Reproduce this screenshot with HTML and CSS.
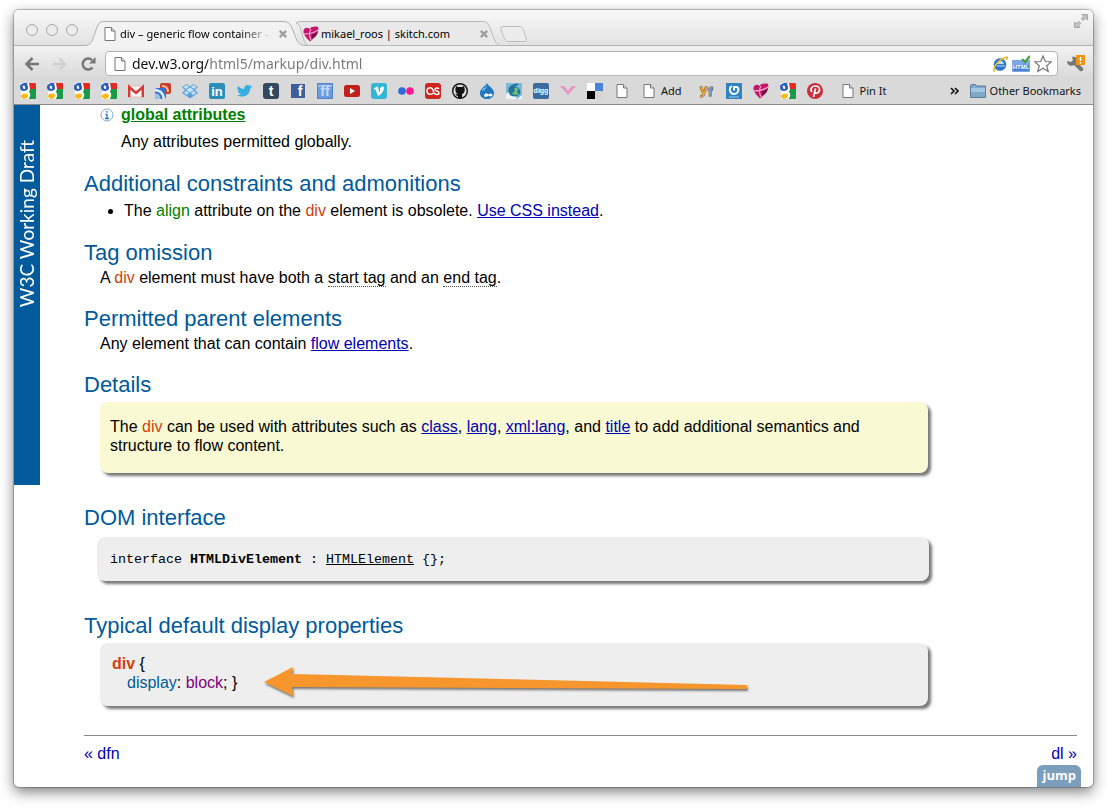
FILE: index.html
```
<!DOCTYPE html>
<html lang="en">
<head>
<meta charset="utf-8">
<title>div – generic flow container</title>
<link rel="stylesheet" href="styles.css">
</head>
<body>
<svg class="defs" aria-hidden="true">
  <symbol id="page" viewBox="0 0 16 16"><path d="M3 1.5h6.5l3.5 3.5v9.5H3z" fill="#fff" stroke="#777"/><path d="M9.5 1.5V5H13" fill="#ddd" stroke="#777"/></symbol>
  <symbol id="google" viewBox="0 0 16 16"><path d="M1 0h14q1 0 1 1v14q0 1-1 1H1z" fill="#fff"/><path d="M9 0h6q1 0 1 1v5H10z" fill="#e32b22"/><path d="M10 6h6v9q0 1-1 1H8.500c2.500-3 2-5 .5-7z" fill="#189a49"/><path d="M0 4.500C0 1.500 2.500 0 5 0h2.500C6.500 2 8.500 3 8 5.500 7.500 8.500 0 9.500 0 4.500z" fill="#2a5fc0"/><ellipse cx="4" cy="4.300" rx="1.200" ry="1.800" transform="rotate(-20 4 4.300)" fill="#fff"/><path d="M1 12.500C2 10 8 9.500 8 12.500 8 16.500 1.500 17 1 13.500z" fill="#f6bb17"/></symbol>
  <symbol id="heart" viewBox="0 0 16 16"><path d="M7 15.500C4 12 0 9 .5 5c.5-3.500 4-4 6-2C8 .5 13 0 15 1c1.500 5-2 10-8 14.500z" fill="#c4156b"/><path d="M8 3c-2 3-2 7 0 11M1 8c5 0 10-1 14-4" fill="none" stroke="#f4a5cb" stroke-width="1.300"/><path d="M9 8.500c3-1 5-2 6-3-1 4-3 6-6 7z" fill="#7d0a42"/></symbol>
  <symbol id="close" viewBox="0 0 10 10"><path d="M1.800 1.800l6.400 6.400M8.200 1.800l-6.400 6.400" stroke="#a0a0a0" stroke-width="2.400"/></symbol>
</svg>
<div class="window">
  <header class="chrome">
    <div class="tabstrip">
      <div class="lights"><button class="light" aria-label="Close window"></button><button class="light" aria-label="Minimize"></button><button class="light" aria-label="Zoom"></button></div>
      <div class="tab tab-active">
        <svg class="tab-shape" viewBox="0 0 222 25" preserveAspectRatio="none"><path d="M0 24.500C8 24.500 8 20 11 12C14 3 15 .5 20 .5H200C205 .5 207 4 210 12C213 20 214 24.500 222 24.500V25H0z" fill="#f2f2f2"/><path d="M0 24.500C8 24.500 8 20 11 12C14 3 15 .5 20 .5H200C205 .5 207 4 210 12C213 20 214 24.500 222 24.500" fill="none" stroke="#b0b0b0"/></svg>
        <svg class="icon"><use href="#page"/></svg>
        <span class="tab-title fade">div – generic flow container –</span>
        <button class="tab-close" aria-label="Close tab"><svg><use href="#close"/></svg></button>
      </div>
      <div class="tab tab-idle">
        <svg class="tab-shape" viewBox="0 0 208 25" preserveAspectRatio="none"><path d="M3 .5H187C192 .5 193 4 196 12C199 20 200 24.500 206 24.500H14C9 24.500 8 20 6 13C4 5 3 3 0 2z" fill="#e9e9e9" stroke="#b8b8b8"/></svg>
        <svg class="icon"><use href="#heart"/></svg>
        <span class="tab-title">mikael_roos | skitch.com</span>
        <button class="tab-close" aria-label="Close tab"><svg><use href="#close"/></svg></button>
      </div>
      <button class="newtab" aria-label="New tab"><svg viewBox="0 0 27 16"><path d="M3 .5H19C23 .5 24 5 26 12C27 15 26 15.500 24 15.500H9C5 15.500 4 12 1.500 5C.3 1.500 1 .5 3 .5z" fill="#ececec" stroke="#bcbcbc"/></svg></button>
      <button class="expand" aria-label="Full screen"><svg viewBox="0 0 16 16"><path d="M9 1.500h5.500V7l-1.800-1.800-2.500 2.500-2-2 2.500-2.500zM1.500 9l1.800 1.800 2.500-2.500 2 2-2.500 2.500L7 14.500H1.500z" fill="#c4c4c4" stroke="#999" stroke-width=".8"/></svg></button>
    </div>
    <div class="toolbar">
      <button class="nav" aria-label="Back"><svg viewBox="0 0 16 16"><path d="M8.500 2L2.500 8l6 6M3 8h12" fill="none" stroke="#777" stroke-width="2.600"/></svg></button>
      <button class="nav" aria-label="Forward"><svg viewBox="0 0 16 16"><path d="M7.500 2.500L13 8l-5.500 5.500M13 8H1" fill="none" stroke="#cfcfcf" stroke-width="2.400"/></svg></button>
      <button class="nav" aria-label="Reload"><svg viewBox="0 0 16 16"><path d="M12.500 11.500A5.500 5.500 0 1 1 12 4" fill="none" stroke="#777" stroke-width="2.500"/><path d="M15.500 1v6.500H9z" fill="#777"/></svg></button>
      <div class="omnibox">
        <svg class="icon"><use href="#page"/></svg>
        <input class="url" type="text" aria-label="Address" value="dev.w3.org/html5/markup/div.html">
        <svg class="icon" viewBox="0 0 16 16"><circle cx="8" cy="8.500" r="6.300" fill="#2e75cc"/><path d="M5 7.500h6.500C11 4.500 5.500 4.500 5 7.500zM5 10h8" fill="#c9e5fb" stroke="#b9dcf6"/><path d="M3 15.500C-1 14 6 3 15 1c1 1 0 2-1 3" fill="none" stroke="#e8bd2c" stroke-width="1.600"/></svg>
        <svg class="icon wide" viewBox="0 0 18 16"><path d="M.5 4.500h17v11H.5z" fill="#4b83d4" stroke="#7ea6df"/><path d="M1 5h16v4H1z" fill="#78a8e8"/><text x="9" y="13" text-anchor="middle" class="t-html">HTML</text><path d="M10 3l3 3 5-6" fill="none" stroke="#41a03a" stroke-width="2.200"/></svg>
        <svg class="icon wide" viewBox="0 0 18 18"><path d="M9 1l2.300 5.500 6 .4-4.600 3.800 1.500 5.800L9 13.300l-5.200 3.200 1.500-5.800L.7 6.900l6-.4z" fill="#fff" stroke="#777" stroke-width="1.200"/></svg>
      </div>
      <button class="wrench" aria-label="Settings"><svg viewBox="0 0 20 18"><path d="M1 6l4 1 2-2-1-3c4-1 6 2 5 5l6 6c1 2-1 4-3 3L8 10C5 12 1 10 1 6z" fill="#777"/><path d="M10 0h9v10h-9z" fill="#ef9414"/><path d="M14.500 2v4M14.500 7v1.500" stroke="#fff" stroke-width="1.600"/></svg></button>
    </div>
    <nav class="bookmarks">
      <a href="#" aria-label="Google"><svg class="icon"><use href="#google"/></svg></a>
      <a href="#" aria-label="Google"><svg class="icon"><use href="#google"/></svg></a>
      <a href="#" aria-label="Google"><svg class="icon"><use href="#google"/></svg></a>
      <a href="#" aria-label="Google"><svg class="icon"><use href="#google"/></svg></a>
      <a href="#" aria-label="Gmail"><svg class="icon" viewBox="0 0 16 16"><path d="M0 3h16v11H0z" fill="#f7f4f2" stroke="#d9a19c" stroke-width=".6"/><path d="M1.200 14V4L8 10l6.800-6v10" fill="none" stroke="#d63a32" stroke-width="2.400"/></svg></a>
      <a href="#" aria-label="Reader"><svg class="icon" viewBox="0 0 16 16"><rect x="5" width="11" height="11" rx="2" fill="#cc3d26"/><path d="M7 3c4 0 6 2 6 6" stroke="#f3b8a6" stroke-width="2" fill="none"/><rect y="5" width="11" height="11" rx="2" fill="#2f72cf"/><path d="M0 6c6 0 10 4 10 10H7.500C7.500 11.500 4.500 8.500 0 8.500z" fill="#e4effb"/><path d="M0 10.500c3.500 0 5.500 2 5.500 5.500H2q-2 0-2-2z" fill="#9cc2ef"/></svg></a>
      <a href="#" aria-label="Dropbox"><svg class="icon" viewBox="0 0 16 16"><path d="M5 1l3 2.500L11 1l5 3-3 3 3 3-3 2-5 3.500L3 12l-3-2 3-3-3-3z" fill="#5a9edb"/><path d="M8 4.500L12 7l-4 2.500L4 7zM1.500 4L5 2l2 2-3.500 2zM14.500 4L11 2 9 4l3.500 2zM2 10l2-2 3 2-2 2zM14 10l-2-2-3 2 2 2z" fill="#c8e3fa"/></svg></a>
      <a href="#" aria-label="LinkedIn"><svg class="icon" viewBox="0 0 16 16"><rect width="16" height="16" rx="2" fill="#2b8dbb"/><text x="8" y="13" text-anchor="middle" class="t-big">in</text></svg></a>
      <a href="#" aria-label="Twitter"><svg class="icon" viewBox="0 0 16 16"><path d="M2 3c2 2 4 3 6 3 0-4 4-5 6-3l2-1-1 2 1 0-2 2c0 6-7 10-13 6 2 0 3 0 4-1-2-1-3-1-3-3h1C1 7 1 5 2 3z" fill="#35aee2"/></svg></a>
      <a href="#" aria-label="Tumblr"><svg class="icon" viewBox="0 0 16 16"><rect width="16" height="16" rx="3" fill="#34485f"/><text x="8" y="13" text-anchor="middle" class="t-xl">t</text></svg></a>
      <a href="#" aria-label="Facebook"><svg class="icon" viewBox="0 0 16 16"><path d="M1 1h14v14H1z" fill="#3f5d9c"/><text x="10" y="13" text-anchor="middle" class="t-xl">f</text></svg></a>
      <a href="#" aria-label="FriendFeed"><svg class="icon" viewBox="0 0 16 16"><path d="M0 0h16v16H0z" fill="#6a9bdf"/><path d="M.5 .5h15v15H.5z" fill="none" stroke="#5282c8"/><path d="M1 3h14" stroke="#a9c9f3" stroke-width="1.500"/><text x="8" y="13" text-anchor="middle" class="t-xl pale">ff</text></svg></a>
      <a href="#" aria-label="YouTube"><svg class="icon" viewBox="0 0 16 16"><rect y="2" width="16" height="12" rx="2.500" fill="#c4201b"/><path d="M6 5l5 3-5 3z" fill="#fff"/></svg></a>
      <a href="#" aria-label="Vimeo"><svg class="icon" viewBox="0 0 16 16"><rect width="16" height="16" rx="3" fill="#35b5d8"/><path d="M3 5.500l3-2c1.500 0 1.500 4 2.300 5.500C9.500 8 10 7 8.700 6.500 9.500 3 13 2.500 13 5c0 3-4 7.500-5.500 7.800C6 12.500 5.500 8 4.800 6.300L3.500 7z" fill="#fff"/></svg></a>
      <a href="#" aria-label="Flickr"><svg class="icon" viewBox="0 0 16 16"><circle cx="4" cy="8" r="3.800" fill="#286bdc"/><circle cx="12" cy="8" r="3.800" fill="#f8168d"/></svg></a>
      <a href="#" aria-label="Last.fm"><svg class="icon" viewBox="0 0 16 16"><rect width="16" height="16" rx="3" fill="#ce2520"/><path d="M8 10c-1 2-6 2-6-2s5-4 6-1l1 3c1 2 5 2 5 0 0-3-4-1-4-3.500 0-2 3-2 4-.7" fill="none" stroke="#fff" stroke-width="1.500"/></svg></a>
      <a href="#" aria-label="GitHub"><svg class="icon" viewBox="0 0 16 16"><circle cx="8" cy="8" r="8" fill="#111"/><circle cx="8" cy="8" r="6.600" fill="#ddd"/><path d="M4 3l2 1h4l2-1c1 3 1.500 7-2 8v4H6v-2c-2 0-2-2-3-2 1-1 2 1 3 0-3-1-3-5-2-8z" fill="#111"/></svg></a>
      <a href="#" aria-label="Drupal"><svg class="icon" viewBox="0 0 16 16"><path d="M8 0c1 3 7 5 7 10 0 8-14 8-14 0C1 5 7 3 8 0z" fill="#2278bd"/><path d="M3 6c3-1 4-2 5-4 0 3-2 5-5 6z" fill="#82c0ea"/><path d="M5 12.500c1-3 3.500-2 4.500-1 2-2 4-1 4 .5s-2.500 2-4 .5c-1 1.500-4.500 2-4.500 0z" fill="#fff"/></svg></a>
      <a href="#" aria-label="Bookmark"><svg class="icon" viewBox="0 0 16 16"><path d="M0 0h16v16H0z" fill="#7cb8da"/><path d="M0 11l6-4 5 9H0zM11 16l5-4v4z" fill="#eaf5fb"/><path d="M4 12C-1 4 7 0 13 1L9 4c4 0 6 3 5 7-2 3-8 3-10 1z" fill="#21759b"/><path d="M8 5c4-1 5 2 3 4l2 2c-3 2-6 0-8-1 3 0 5-2 3-5z" fill="#72bd70"/></svg></a>
      <a href="#" aria-label="Digg"><svg class="icon" viewBox="0 0 16 16"><rect width="16" height="16" rx="2" fill="#3b6b9f"/><text x="8" y="10" text-anchor="middle" class="t-digg">digg</text></svg></a>
      <a href="#" aria-label="Bookmark"><svg class="icon" viewBox="0 0 16 16"><path d="M0 3h4l4 5 4-5h4l-8 9z" fill="#e68fbd"/><path d="M2 3l6 7 6-7" stroke="#f4bddb" stroke-dasharray="1 1" fill="none"/></svg></a>
      <a href="#" aria-label="Delicious"><svg class="icon" viewBox="0 0 16 16"><path d="M0 0h8v8H0z" fill="#fff"/><path d="M8 0h8v8H8z" fill="#4b83d8"/><path d="M0 8h8v8H0z" fill="#000"/><path d="M8 8h8v8H8z" fill="#d4d4d4"/></svg></a>
      <a href="#" aria-label="Bookmark"><svg class="icon"><use href="#page"/></svg></a>
      <a href="#" class="labelled"><svg class="icon"><use href="#page"/></svg>Add</a>
      <a href="#" aria-label="YF"><svg class="icon" viewBox="0 0 16 16"><text x="1" y="11" class="t-yf y">y</text><text x="9" y="13" class="t-yf f">f</text></svg></a>
      <a href="#" aria-label="Bookmark"><svg class="icon" viewBox="0 0 16 16"><path d="M0 0h16v16H0z" fill="#2f83c0"/><path d="M6 3C2 5 4 11 8 11s6-5 3-7H8v3.500" fill="none" stroke="#fff" stroke-width="1.800"/><path d="M3 14h10" stroke="#9fcbe9"/></svg></a>
      <a href="#" aria-label="Skitch"><svg class="icon"><use href="#heart"/></svg></a>
      <a href="#" aria-label="Google"><svg class="icon"><use href="#google"/></svg></a>
      <a href="#" aria-label="Pinterest"><svg class="icon" viewBox="0 0 16 16"><circle cx="8" cy="8" r="8" fill="#cc2f38"/><path d="M5 9C2.500 6 5 3 8.500 3s5 3 3.500 5.500-4 2-4 .5M8.500 5.500L6.500 14" fill="none" stroke="#fff" stroke-width="1.700"/></svg></a>
      <a href="#" class="labelled pin"><svg class="icon"><use href="#page"/></svg>Pin It</a>
      <button class="more" aria-label="More bookmarks"><svg viewBox="0 0 9 8"><path d="M1 1l3 3-3 3M5 1l3 3-3 3" fill="none" stroke="#111" stroke-width="1.600"/></svg></button>
      <a href="#" class="labelled folder"><svg class="icon" viewBox="0 0 16 16"><path d="M.5 14.500v-12l1-1h4l1 1.500h9v11.500z" fill="#7fa9c8" stroke="#5b7f9b"/><path d="M1 5h14v4H1z" fill="#a6c6dd"/></svg>Other Bookmarks</a>
    </nav>
  </header>
  <div class="page">
    <aside class="ribbon"><span>W3C Working Draft</span></aside>
    <main class="content">
      <dl class="attrs">
        <dt><svg class="info" viewBox="0 0 14 14"><circle cx="7" cy="7" r="6" fill="none" stroke="#7fabd0"/><path d="M7 3v1.800M5.500 6.500H7v4M5 10.500h4" fill="none" stroke="#2a75b0" stroke-width="1.300"/></svg><a href="#" class="global">global attributes</a></dt>
        <dd>Any attributes permitted globally.</dd>
      </dl>
      <section>
        <h2>Additional constraints and admonitions</h2>
        <ul><li>The <span class="attr">align</span> attribute on the <span class="elem">div</span> element is obsolete. <a href="#">Use CSS instead</a>.</li></ul>
      </section>
      <section>
        <h2>Tag omission</h2>
        <p>A <span class="elem">div</span> element must have both a <span class="term">start tag</span> and an <span class="term">end tag</span>.</p>
      </section>
      <section>
        <h2>Permitted parent elements</h2>
        <p>Any element that can contain <a href="#">flow elements</a>.</p>
      </section>
      <section>
        <h2>Details</h2>
        <div class="box note">The <span class="elem">div</span> can be used with attributes such as <a href="#">class</a>, <a href="#">lang</a>, <a href="#">xml:lang</a>, and <a href="#">title</a> to add additional semantics and structure to flow content.</div>
      </section>
      <section>
        <h2>DOM interface</h2>
        <pre class="box idl">interface <b>HTMLDivElement</b> : <a href="#">HTMLElement</a> {};</pre>
      </section>
      <section>
        <h2>Typical default display properties</h2>
        <div class="box css">
          <div><b class="elem">div</b> {</div>
          <div class="decl"><span class="prop">display</span>: <span class="value">block</span>; }</div>
          <svg class="arrow" viewBox="0 0 490 36"><path d="M2 17L31 2l-1 7 455 11v4L30 22l1 9z" fill="#f7962d"/></svg>
        </div>
      </section>
      <footer class="pager"><a href="#">« dfn</a><a href="#">dl »</a></footer>
    </main>
    <button class="jump">jump</button>
  </div>
</div>
</body>
</html>
```
FILE: styles.css
```
* { box-sizing: border-box; }
body {
  margin: 0;
  padding: 10px 14px 20px;
  background: #fff;
  color: #000;
  font: 16px/19px "Liberation Sans", Arial, sans-serif;
}
button { padding: 0; border: 0; background: none; display: flex; }
.defs { position: absolute; width: 0; height: 0; }
.window {
  border-radius: 5px;
  background: #fff;
  box-shadow: 0 0 1px 1px rgba(0,0,0,.25), 0 5px 14px rgba(0,0,0,.5);
  overflow: hidden;
}
.chrome { font: 11px/16px "Noto Sans", "Open Sans", sans-serif; border-bottom: 1px solid #888; }
.icon { width: 16px; height: 16px; flex: none; }
.icon.wide { width: 18px; height: 18px; }

.tabstrip {
  display: flex;
  align-items: flex-end;
  height: 36px;
  background: linear-gradient(#f8f8f8, #e2e2e2);
  box-shadow: inset 0 -1px #b0b0b0;
}
.lights { display: flex; gap: 8px; padding: 0 0 10px 12px; width: 70px; }
.light { width: 12px; height: 12px; border: 1px solid #a8a8a8; border-radius: 50%; background: #ececec; flex: none; }
.tab { position: relative; display: flex; align-items: center; height: 25px; gap: 2px; }
.tab > * { position: relative; }
.tab .tab-shape { position: absolute; inset: 0; width: 100%; height: 100%; }
.tab-active { width: 222px; padding: 0 18px 0 18px; z-index: 1; }
.tab-idle { width: 208px; padding: 0 15px 0 7px; margin-left: -10px; }
.tab-title { flex: 1; white-space: nowrap; overflow: hidden; }
.fade { mask-image: linear-gradient(to right, #000 120px, transparent 152px); }
.tab-close svg { width: 10px; height: 10px; }
.newtab { margin: 0 0 4px -4px; }
.newtab svg { width: 27px; height: 16px; }
.expand { margin: 0 4px 17px auto; }
.expand svg { width: 16px; height: 16px; }

.toolbar {
  display: flex;
  align-items: center;
  gap: 12px;
  padding: 5px 7px 1px 10px;
  background: linear-gradient(#f2f2f2, #dadada);
}
.nav svg { width: 16px; height: 16px; }
.omnibox {
  flex: 1;
  display: flex;
  align-items: center;
  gap: 4px;
  height: 25px;
  padding: 0 5px 0 6px;
  margin-left: -3px;
  border: 1px solid #b4b4b4;
  border-radius: 4px;
  background: #fff;
}
.url {
  flex: 1;
  min-width: 0;
  padding: 0;
  border: 0;
  outline: 0;
  font: 14px/20px "Noto Sans", "Open Sans", sans-serif;
  color: #333;
  background: linear-gradient(to right, #111 76px, #777 76px);
  background-clip: text;
  -webkit-text-fill-color: transparent;
}
.wrench { margin-left: -4px; }
.wrench svg { width: 20px; height: 18px; }

.bookmarks {
  display: flex;
  align-items: center;
  gap: 11px;
  height: 27px;
  padding: 0 12px 0 6px;
  background: #d9d9d9;
}
.bookmarks a { display: flex; color: #111; text-decoration: none; white-space: nowrap; }
.labelled { gap: 4px; margin-right: 6px; }
.bookmarks .pin { margin-left: 6px; }
.more { margin-left: auto; }
.more svg { width: 9px; height: 8px; }
.bookmarks .folder { margin-right: 0; }
text { font-family: "Liberation Sans", Arial, sans-serif; font-weight: bold; fill: #fff; }
.t-big { font-size: 13px; }
.t-xl { font-size: 14px; }
.pale { fill: #c2daf8; }
.t-html { font-size: 6px; }
.t-digg { font-size: 7px; }
.t-yf { font-size: 13px; stroke: #665533; stroke-width: 1px; paint-order: stroke; }
.y { fill: #f4aa2a; }
.f { fill: #6f9fe0; }

.page { position: relative; display: flex; align-items: flex-start; }
.ribbon {
  width: 26px;
  height: 380px;
  flex: none;
  padding-top: 35px;
  background: #005a9c;
  color: #fff;
  font: 19px/26px Lato, sans-serif;
}
.ribbon span { writing-mode: vertical-rl; transform: rotate(180deg); white-space: nowrap; }
.content { flex: 1; min-width: 0; padding: 0 16px 24px 44px; }
a { color: #0000b4; }
.attrs { margin: 0 0 20px 16px; }
.attrs dt { display: flex; align-items: center; gap: 7px; margin-bottom: 8px; }
.attrs dd { margin: 0 0 0 21px; }
.info { width: 14px; height: 14px; }
.global { color: #008000; font-weight: bold; }
h2 { margin: 0; color: #005a9c; font-size: 22px; line-height: 26px; font-weight: normal; }
section { margin-bottom: 19px; }
section p { margin: 2px 0 0 16px; }
ul { margin: 0; padding: 4px 0 1px 40px; }
.attr { color: #008000; }
.elem { color: #d1400e; }
.term { border-bottom: 1px dotted #555; }
.box { position: relative; max-width: 828px; margin: 4px 0 32px 16px; border-radius: 8px; box-shadow: 3px 3px 3px #777; }
.note { padding: 15px 10px 18px; background: #f9f9d3; }
.idl {
  max-width: 832px;
  margin: 6px 0 32px 13px;
  padding: 13px 13px 12px;
  background: #eee;
  font-family: "Liberation Mono", monospace;
  font-size: smaller;
}
.idl a { color: #000; }
.css { padding: 11px 12px 14px; margin-bottom: 29px; background: #eee; }
.decl { padding-left: 15px; }
.prop { color: #005a9c; }
.value { color: #800080; }
.arrow { position: absolute; left: 162px; top: 22px; width: 490px; height: 36px; filter: drop-shadow(1px 2px 1px rgba(0,0,0,.5)); }
.pager { display: flex; justify-content: space-between; padding-top: 8px; border-top: 1px solid #888; }
.pager a { text-decoration: none; }
.jump {
  position: absolute;
  right: 12px;
  bottom: 0;
  padding: 0 5px 2px;
  border-radius: 6px 6px 0 0;
  background: #7a9ebb;
  color: #fff;
  font: bold 13px/20px "Open Sans", sans-serif;
}
```
